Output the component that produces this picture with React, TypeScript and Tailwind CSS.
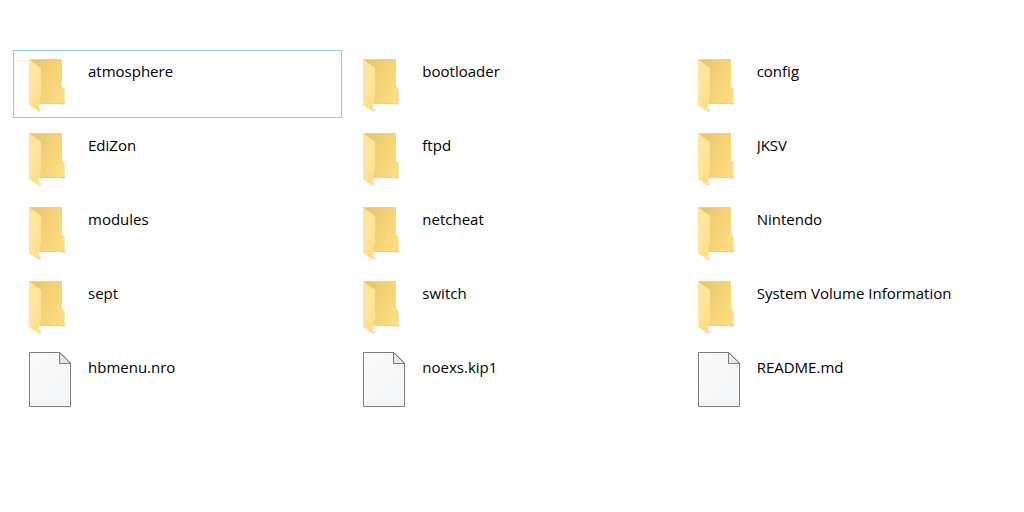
type Entry = { name: string; kind: "folder" | "file"; focused?: boolean };

const entries: Entry[] = [
  { name: "atmosphere", kind: "folder", focused: true },
  { name: "bootloader", kind: "folder" },
  { name: "config", kind: "folder" },
  { name: "EdiZon", kind: "folder" },
  { name: "ftpd", kind: "folder" },
  { name: "JKSV", kind: "folder" },
  { name: "modules", kind: "folder" },
  { name: "netcheat", kind: "folder" },
  { name: "Nintendo", kind: "folder" },
  { name: "sept", kind: "folder" },
  { name: "switch", kind: "folder" },
  { name: "System Volume Information", kind: "folder" },
  { name: "hbmenu.nro", kind: "file" },
  { name: "noexs.kip1", kind: "file" },
  { name: "README.md", kind: "file" },
];

function IconGradients() {
  return (
    <svg width="0" height="0" className="absolute" aria-hidden="true">
      <defs>
        <linearGradient id="folder-back" x1="0" y1="0.1" x2="1" y2="0.7">
          <stop offset="0" stopColor="#e9c467" />
          <stop offset="0.5" stopColor="#f3d174" />
          <stop offset="1" stopColor="#fcdd80" />
        </linearGradient>
        <linearGradient id="folder-flap" x1="0" y1="0" x2="0.6" y2="1">
          <stop offset="0" stopColor="#ffe595" />
          <stop offset="0.5" stopColor="#ffe79c" />
          <stop offset="1" stopColor="#fedd84" />
        </linearGradient>
        <linearGradient id="folder-shadow" x1="0" y1="0" x2="1" y2="0">
          <stop offset="0" stopColor="#000" stopOpacity="0.18" />
          <stop offset="1" stopColor="#000" stopOpacity="0" />
        </linearGradient>
        <linearGradient id="file-page" x1="0" y1="0" x2="1" y2="1">
          <stop offset="0" stopColor="#fafafa" />
          <stop offset="1" stopColor="#f3f5f7" />
        </linearGradient>
      </defs>
    </svg>
  );
}

function FolderIcon() {
  return (
    <svg viewBox="0 0 44 58" className="h-[58px] w-11 shrink-0" aria-hidden="true">
      <path d="M36 46.5L39.5 47L36.5 49H33z" fill="url(#folder-shadow)" />
      <path d="M11 53L15 53.5L11.5 56z" fill="url(#folder-shadow)" />
      <path d="M1 3H34V30.5L36.7 33V48H11L1 40z" fill="url(#folder-back)" />
      <path d="M1 3.5H34" stroke="#f3d37c" strokeWidth="1" />
      <path d="M12 47.5H36.7" stroke="#f3d077" strokeWidth="1" />
      <path d="M1 3.5L12.7 12V40.5L11.3 42V56L1 49z" fill="url(#folder-flap)" />
      <path d="M1 3.7L12.4 12V40.3L11 42V55.5" fill="none" stroke="#ffebab" strokeWidth="0.6" />
    </svg>
  );
}

function FileIcon() {
  return (
    <svg viewBox="0 0 44 58" className="h-[58px] w-11 shrink-0" aria-hidden="true">
      <path d="M1.5 0.5H32L42.5 11V54.5H1.5z" fill="url(#file-page)" stroke="#7c7c7c" strokeWidth="1" />
      <path d="M2.5 53.5V1.5H31M41.5 12V53.5H2.5" fill="none" stroke="#fff" strokeWidth="1" />
      <path d="M31.5 0.5V11.5H42.5z" fill="#e9e9e9" stroke="#7c7c7c" strokeWidth="1" />
    </svg>
  );
}

function Tile({ name, kind, focused }: Entry) {
  return (
    <li className="min-w-0">
      <button
        type="button"
        className={`flex h-[68px] w-full items-start gap-4 overflow-hidden border pt-[5px] pl-[14px] text-left ${
          focused ? "border-[#8fccfb]" : "border-transparent"
        }`}
      >
        {kind === "folder" ? <FolderIcon /> : <FileIcon />}
        <span className="truncate pt-[5px] text-[15px] leading-5 text-black">{name}</span>
      </button>
    </li>
  );
}

export default function App() {
  return (
    <main className="min-h-screen bg-white px-[13px] py-[50px] font-['Open_Sans',sans-serif]">
      <IconGradients />
      <ul className="grid grid-cols-3 gap-x-[5px] gap-y-[6px]">
        {entries.map((entry) => (
          <Tile key={entry.name} {...entry} />
        ))}
      </ul>
    </main>
  );
}
